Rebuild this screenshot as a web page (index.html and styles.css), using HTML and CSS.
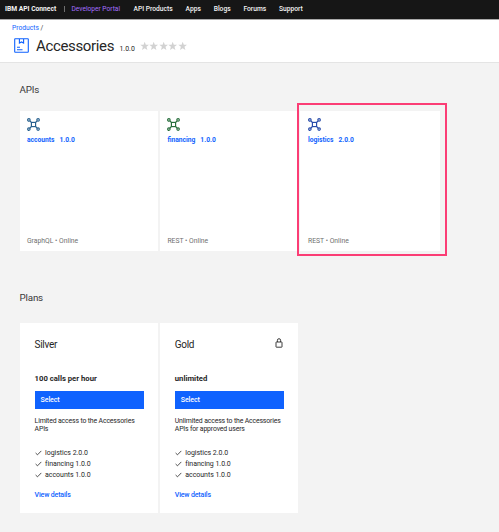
FILE: index.html
```html
<!DOCTYPE html>
<html lang="en">
<head>
<meta charset="utf-8">
<title>Accessories - Developer Portal</title>
<link rel="stylesheet" href="styles.css">
</head>
<body>
<svg class="defs" width="0" height="0" aria-hidden="true">
  <symbol id="api" viewBox="0 0 13 13">
    <g fill="none" stroke="currentColor" stroke-width="1.15">
      <rect x="4.4" y="4.4" width="4.2" height="4.2"/>
      <circle cx="1.9" cy="1.9" r="1.25"/><circle cx="11.1" cy="1.9" r="1.25"/>
      <circle cx="1.9" cy="11.1" r="1.25"/><circle cx="11.1" cy="11.1" r="1.25"/>
      <path d="M2.8 2.8l1.8 1.8M10.2 2.8L8.4 4.6M2.8 10.2l1.8-1.8M10.2 10.2L8.4 8.4"/>
    </g>
  </symbol>
  <symbol id="star" viewBox="0 0 10 10">
    <path fill="currentColor" d="M5 .4l1.2 3.2 3.5.1-2.8 2.2 1 3.4L5 7.4 2.1 9.3l1-3.4L.3 3.7l3.5-.1z"/>
  </symbol>
  <symbol id="check" viewBox="0 0 7 6">
    <path fill="none" stroke="currentColor" stroke-width=".8" d="M.6 3l1.9 1.8L6.3.9"/>
  </symbol>
</svg>
<header class="topbar">
  <strong class="brand">IBM API Connect</strong>
  <span class="divider"></span>
  <span class="portal">Developer Portal</span>
  <nav class="nav"><a>API Products</a><a>Apps</a><a>Blogs</a><a>Forums</a><a>Support</a></nav>
</header>
<section class="hero">
  <div class="crumbs"><a>Products</a> <span>/</span></div>
  <div class="title-row">
    <svg class="product" viewBox="0 0 15 15"><g fill="none" stroke="currentColor" stroke-width="1.1"><rect x=".7" y=".7" width="13.6" height="13.6" rx=".5"/><path d="M5.4 1v4l2.1-1.1L9.6 5V1M3 9.3h3M3 11.7h5.5"/></g></svg>
    <h1>Accessories</h1>
    <span class="version">1.0.0</span>
    <span class="stars"><svg><use href="#star"/></svg><svg><use href="#star"/></svg><svg><use href="#star"/></svg><svg><use href="#star"/></svg><svg><use href="#star"/></svg></span>
  </div>
</section>
<main>
  <h2>APIs</h2>
  <div class="apis">
    <article class="api">
      <svg class="api-icon blue"><use href="#api"/></svg>
      <h3><span>accounts</span><span>1.0.0</span></h3>
      <p>GraphQL • Online</p>
    </article>
    <article class="api">
      <svg class="api-icon green"><use href="#api"/></svg>
      <h3><span>financing</span><span>1.0.0</span></h3>
      <p>REST • Online</p>
    </article>
    <article class="api selected">
      <svg class="api-icon indigo"><use href="#api"/></svg>
      <h3><span>logistics</span><span>2.0.0</span></h3>
      <p>REST • Online</p>
    </article>
  </div>
  <h2 class="plans-title">Plans</h2>
  <div class="plans">
    <article class="plan">
      <h4>Silver</h4>
      <p class="limit">100 calls per hour</p>
      <button>Select</button>
      <p class="desc">Limited access to the Accessories<br>APIs</p>
      <ul>
        <li><svg><use href="#check"/></svg>logistics 2.0.0</li>
        <li><svg><use href="#check"/></svg>financing 1.0.0</li>
        <li><svg><use href="#check"/></svg>accounts 1.0.0</li>
      </ul>
      <a class="details">View details</a>
    </article>
    <article class="plan">
      <h4>Gold <svg class="lock" viewBox="0 0 8 10"><g fill="none" stroke="currentColor" stroke-width=".9"><rect x="1" y="4" width="6" height="5.2" rx=".4"/><path d="M2.4 4V2.3a1.6 1.6 0 0 1 3.2 0V4"/></g></svg></h4>
      <p class="limit">unlimited</p>
      <button>Select</button>
      <p class="desc">Unlimited access to the Accessories<br>APIs for approved users</p>
      <ul>
        <li><svg><use href="#check"/></svg>logistics 2.0.0</li>
        <li><svg><use href="#check"/></svg>financing 1.0.0</li>
        <li><svg><use href="#check"/></svg>accounts 1.0.0</li>
      </ul>
      <a class="details">View details</a>
    </article>
  </div>
</main>
</body>
</html>
```
FILE: styles.css
```css
*, *::after { box-sizing: border-box; margin: 0; padding: 0; }
body { width: 499px; height: 532px; overflow: hidden; background: #f3f3f3; color: #262626; font: 7px/10px Roboto, "Liberation Sans", sans-serif; }
svg { display: block; flex: none; }
.defs { position: absolute; }
h1, h2, h3, h4 { font-weight: 400; }
.topbar { display: flex; align-items: center; height: 19px; padding: 0 0 2px 5px; background: #161616; color: #f4f4f4; white-space: nowrap; }
.brand { width: 59px; font-size: 6.7px; font-weight: 700; }
.divider { width: 1px; height: 6px; margin-right: 6.5px; background: #6f6f6f; }
.portal { width: 62px; color: #a56eff; font-size: 6.6px; }
.nav { display: flex; gap: 12.8px; font-size: 6.7px; font-weight: 500; }
.hero { height: 44px; border-top: 1px solid #aaa; border-bottom: 1px solid #e4e4e4; background: #fff; }
.crumbs { padding: 3px 0 0 12px; color: #393939; font-size: 6.7px; }
.crumbs a { color: #0f62fe; }
.title-row { display: flex; align-items: center; height: 25px; padding-left: 14px; }
.product { width: 15px; height: 15px; margin-right: 7px; color: #0f62fe; }
h1 { width: 83.5px; font-size: 15px; line-height: 20px; letter-spacing: -.35px; }
.version { width: 20.5px; padding-top: 6px; font-size: 6.9px; }
.stars { display: flex; color: #d2d2d2; }
.stars svg { width: 9.4px; height: 10px; }
main { padding: 19px 0 0 19.6px; }
h2 { height: 29px; color: #393939; font-size: 9.8px; line-height: 16px; letter-spacing: -.2px; }
.apis { display: flex; gap: 1.6px; height: 140px; }
.api { position: relative; display: flex; flex-direction: column; width: 138.8px; padding: 7px 7.4px; background: #fff; }
.api-icon { width: 13px; height: 13px; margin-bottom: 4px; }
.blue { color: #235d8c; }
.green { color: #236b38; }
.indigo { color: #2448a8; }
h3 { display: flex; gap: 5px; color: #0f62fe; font-size: 6.7px; font-weight: 700; }
.api p { margin-top: auto; margin-bottom: -2px; color: #6f6f6f; font-size: 6.8px; }
.selected { width: 140px; padding-left: 7.6px; }
.selected::after { content: ""; position: absolute; left: -3.4px; top: -8px; width: 150px; height: 153px; border: 2px solid #fb3d75; }
.plans-title { margin-top: 39px; height: 33px; }
.plans { display: flex; gap: 1.6px; height: 190px; }
.plan { width: 138.6px; padding: 14px 15px; background: #fff; }
h4 { display: flex; justify-content: space-between; height: 35px; font-size: 10px; line-height: 16px; letter-spacing: -.3px; }
.lock { width: 8px; height: 10px; margin-top: 1px; }
.limit { height: 19px; font-size: 7.7px; line-height: 14px; font-weight: 700; }
button { display: block; width: 109px; height: 18px; padding-left: 6px; border: 0; background: #0f62fe; color: #fff; font: 500 7px/18px Roboto, sans-serif; letter-spacing: -.1px; text-align: left; }
.desc { height: 33px; padding-top: 8px; font-size: 6.9px; line-height: 8px; letter-spacing: -.15px; white-space: nowrap; }
ul { padding-top: 5px; list-style: none; }
li { display: flex; align-items: center; height: 11px; font-size: 7px; letter-spacing: -.04px; }
li svg { width: 7px; height: 6px; margin-right: 3.5px; }
.details { display: block; margin-top: 10px; color: #0f62fe; font-size: 7px; font-weight: 500; letter-spacing: -.16px; }
```
